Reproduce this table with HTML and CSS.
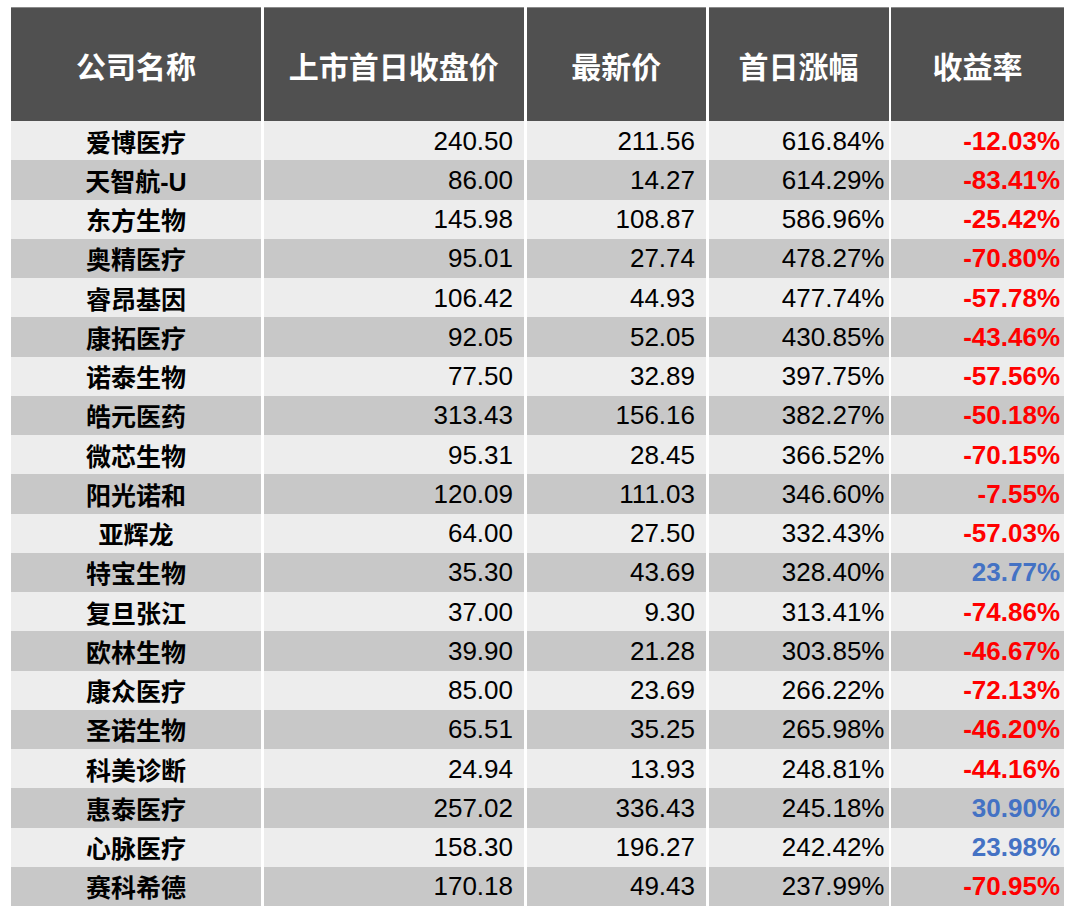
FILE: index.html
```html
<!DOCTYPE html>
<html lang="zh-CN">
<head>
<meta charset="utf-8">
<title>IPO</title>
<link rel="stylesheet" href="styles.css">
</head>
<body>
<div class="table">
  <div class="row head">
    <div class="cell">公司名称</div>
    <div class="cell">上市首日收盘价</div>
    <div class="cell">最新价</div>
    <div class="cell">首日涨幅</div>
    <div class="cell">收益率</div>
  </div>
  <div class="row light"><div class="cell name">爱博医疗</div><div class="cell num c2">240.50</div><div class="cell num c3">211.56</div><div class="cell num c4">616.84%</div><div class="cell num c5 neg">-12.03%</div></div>
  <div class="row dark"><div class="cell name">天智航-U</div><div class="cell num c2">86.00</div><div class="cell num c3">14.27</div><div class="cell num c4">614.29%</div><div class="cell num c5 neg">-83.41%</div></div>
  <div class="row light"><div class="cell name">东方生物</div><div class="cell num c2">145.98</div><div class="cell num c3">108.87</div><div class="cell num c4">586.96%</div><div class="cell num c5 neg">-25.42%</div></div>
  <div class="row dark"><div class="cell name">奥精医疗</div><div class="cell num c2">95.01</div><div class="cell num c3">27.74</div><div class="cell num c4">478.27%</div><div class="cell num c5 neg">-70.80%</div></div>
  <div class="row light"><div class="cell name">睿昂基因</div><div class="cell num c2">106.42</div><div class="cell num c3">44.93</div><div class="cell num c4">477.74%</div><div class="cell num c5 neg">-57.78%</div></div>
  <div class="row dark"><div class="cell name">康拓医疗</div><div class="cell num c2">92.05</div><div class="cell num c3">52.05</div><div class="cell num c4">430.85%</div><div class="cell num c5 neg">-43.46%</div></div>
  <div class="row light"><div class="cell name">诺泰生物</div><div class="cell num c2">77.50</div><div class="cell num c3">32.89</div><div class="cell num c4">397.75%</div><div class="cell num c5 neg">-57.56%</div></div>
  <div class="row dark"><div class="cell name">皓元医药</div><div class="cell num c2">313.43</div><div class="cell num c3">156.16</div><div class="cell num c4">382.27%</div><div class="cell num c5 neg">-50.18%</div></div>
  <div class="row light"><div class="cell name">微芯生物</div><div class="cell num c2">95.31</div><div class="cell num c3">28.45</div><div class="cell num c4">366.52%</div><div class="cell num c5 neg">-70.15%</div></div>
  <div class="row dark"><div class="cell name">阳光诺和</div><div class="cell num c2">120.09</div><div class="cell num c3">111.03</div><div class="cell num c4">346.60%</div><div class="cell num c5 neg">-7.55%</div></div>
  <div class="row light"><div class="cell name">亚辉龙</div><div class="cell num c2">64.00</div><div class="cell num c3">27.50</div><div class="cell num c4">332.43%</div><div class="cell num c5 neg">-57.03%</div></div>
  <div class="row dark"><div class="cell name">特宝生物</div><div class="cell num c2">35.30</div><div class="cell num c3">43.69</div><div class="cell num c4">328.40%</div><div class="cell num c5 pos">23.77%</div></div>
  <div class="row light"><div class="cell name">复旦张江</div><div class="cell num c2">37.00</div><div class="cell num c3">9.30</div><div class="cell num c4">313.41%</div><div class="cell num c5 neg">-74.86%</div></div>
  <div class="row dark"><div class="cell name">欧林生物</div><div class="cell num c2">39.90</div><div class="cell num c3">21.28</div><div class="cell num c4">303.85%</div><div class="cell num c5 neg">-46.67%</div></div>
  <div class="row light"><div class="cell name">康众医疗</div><div class="cell num c2">85.00</div><div class="cell num c3">23.69</div><div class="cell num c4">266.22%</div><div class="cell num c5 neg">-72.13%</div></div>
  <div class="row dark"><div class="cell name">圣诺生物</div><div class="cell num c2">65.51</div><div class="cell num c3">35.25</div><div class="cell num c4">265.98%</div><div class="cell num c5 neg">-46.20%</div></div>
  <div class="row light"><div class="cell name">科美诊断</div><div class="cell num c2">24.94</div><div class="cell num c3">13.93</div><div class="cell num c4">248.81%</div><div class="cell num c5 neg">-44.16%</div></div>
  <div class="row dark"><div class="cell name">惠泰医疗</div><div class="cell num c2">257.02</div><div class="cell num c3">336.43</div><div class="cell num c4">245.18%</div><div class="cell num c5 pos">30.90%</div></div>
  <div class="row light"><div class="cell name">心脉医疗</div><div class="cell num c2">158.30</div><div class="cell num c3">196.27</div><div class="cell num c4">242.42%</div><div class="cell num c5 pos">23.98%</div></div>
  <div class="row dark"><div class="cell name">赛科希德</div><div class="cell num c2">170.18</div><div class="cell num c3">49.43</div><div class="cell num c4">237.99%</div><div class="cell num c5 neg">-70.95%</div></div>
</div>
</body>
</html>
```

FILE: styles.css
```css
html, body {
  margin: 0;
  padding: 0;
  background: #ffffff;
}
body {
  padding: 7px 0 0 11px;
  font-family: "Liberation Sans", "Noto Sans CJK SC", sans-serif;
}
.table {
  width: 1053px;
  display: flex;
  flex-direction: column;
}
.row {
  display: grid;
  grid-template-columns: 250px 260.5px 179.5px 180px 173px;
  column-gap: 2.5px;
}
.head {
  height: 114px;
}
.head .cell {
  background: #505050;
  border-top: 1px solid #8a8a8a;
  color: #ffffff;
  font-family: "Noto Sans CJK SC", sans-serif;
  font-weight: 700;
  font-size: 30px;
  display: flex;
  align-items: center;
  justify-content: center;
  box-sizing: border-box;
}
.light, .dark {
  height: 39.25px;
}
.light .cell { background: #ededed; }
.dark .cell { background: #c8c8c8; }
.cell {
  display: flex;
  align-items: center;
  color: #000000;
}
.name {
  justify-content: center;
  font-family: "Liberation Sans", "Noto Sans CJK SC", sans-serif;
  font-weight: 700;
  font-size: 25px;
}
.num {
  justify-content: flex-end;
  font-size: 26px;
  padding-top: 1px;
  box-sizing: border-box;
}
.c2 { padding-right: 11px; }
.c3 { padding-right: 11px; }
.c4 { padding-right: 4px; }
.c5 { padding-right: 4px; font-weight: 700; }
.neg { color: #ff0000; }
.pos { color: #4472c4; }
```
